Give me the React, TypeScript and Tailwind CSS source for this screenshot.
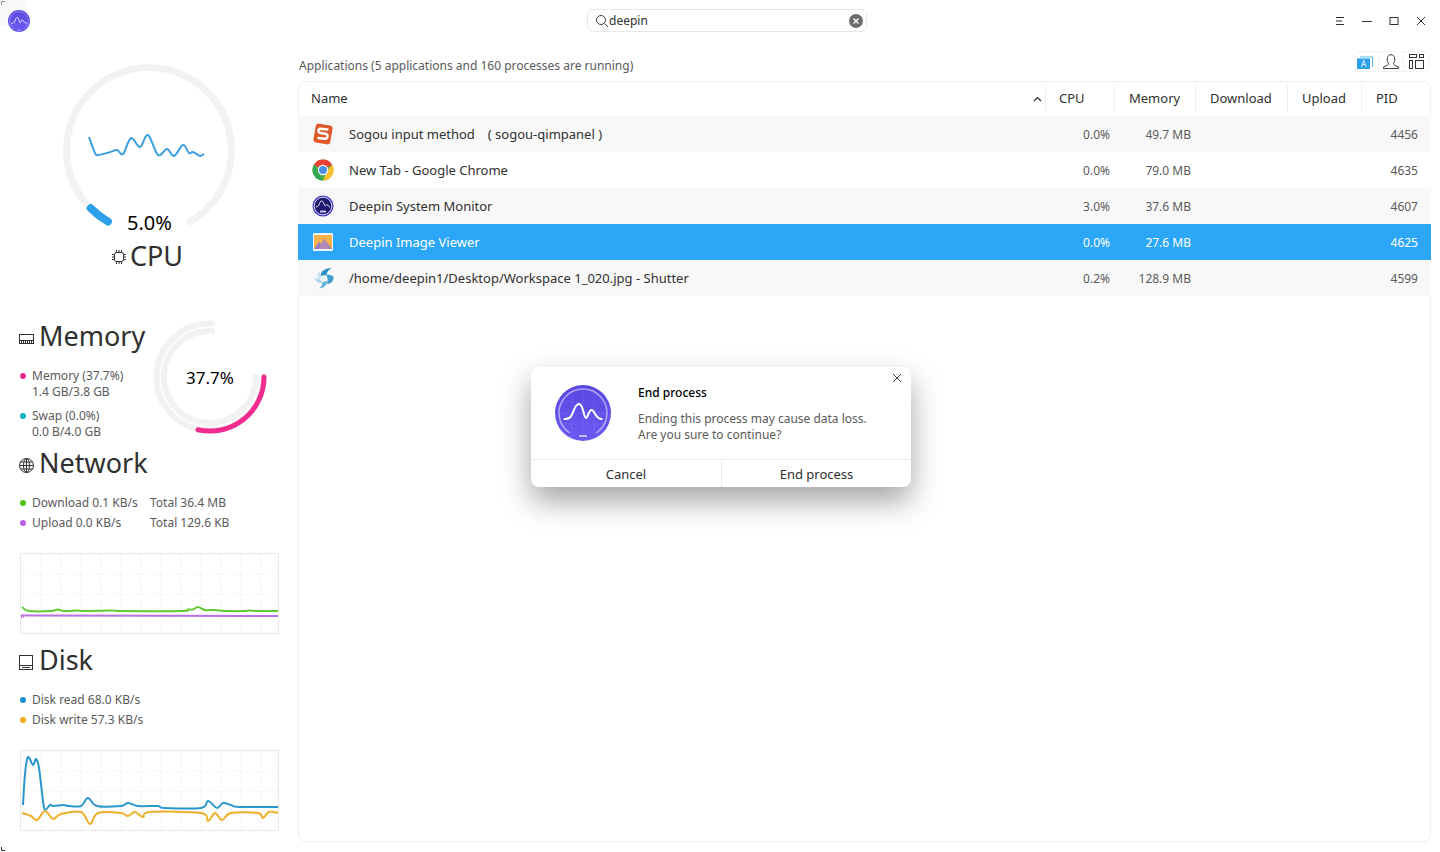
const processes = [
  { name: "Sogou input method", extra: "( sogou-qimpanel )", cpu: "0.0%", mem: "49.7 MB", pid: "4456", icon: "sogou" },
  { name: "New Tab - Google Chrome", cpu: "0.0%", mem: "79.0 MB", pid: "4635", icon: "chrome" },
  { name: "Deepin System Monitor", cpu: "3.0%", mem: "37.6 MB", pid: "4607", icon: "monitor" },
  { name: "Deepin Image Viewer", cpu: "0.0%", mem: "27.6 MB", pid: "4625", icon: "viewer", selected: true },
  { name: "/home/deepin1/Desktop/Workspace 1_020.jpg - Shutter", cpu: "0.2%", mem: "128.9 MB", pid: "4599", icon: "shutter" },
];

type Pt = [number, number];

function smooth(pts: Pt[]) {
  let d = `M${pts[0][0]} ${pts[0][1]}`;
  for (let i = 0; i < pts.length - 1; i++) {
    const p0 = pts[Math.max(i - 1, 0)];
    const p1 = pts[i];
    const p2 = pts[i + 1];
    const p3 = pts[Math.min(i + 2, pts.length - 1)];
    const c1x = p1[0] + (p2[0] - p0[0]) / 6;
    const c1y = p1[1] + (p2[1] - p0[1]) / 6;
    const c2x = p2[0] - (p3[0] - p1[0]) / 6;
    const c2y = p2[1] - (p3[1] - p1[1]) / 6;
    d += ` C${c1x.toFixed(1)} ${c1y.toFixed(1)} ${c2x.toFixed(1)} ${c2y.toFixed(1)} ${p2[0]} ${p2[1]}`;
  }
  return d;
}

const cpuLine: Pt[] = [[26, 73], [32, 89], [35, 91], [46, 88.5], [54, 86], [60, 90], [68, 74], [77, 83], [85, 71], [95, 91], [104, 85], [111, 92], [120, 81], [126, 89], [130, 88], [137, 92], [141, 90]];
const netDown: Pt[] = [[1, 53], [8, 57], [30, 57], [37, 55.5], [43, 57], [57, 56.5], [63, 57], [90, 56.5], [100, 57], [160, 57], [167, 55.5], [172, 55.5], [177, 53], [184, 56], [193, 56], [207, 57], [223, 57], [228, 56.5], [237, 57], [258, 57]];
const netUp: Pt[] = [[2, 63], [10, 61.5], [258, 62]];
const diskRead: Pt[] = [[2, 54], [4, 23], [7, 6], [12, 14], [15, 8], [18, 17], [22, 50], [24, 59], [29, 54], [33, 55], [42, 54], [48, 55], [60, 55], [67, 47], [76, 55], [100, 55], [107, 52], [117, 55], [137, 55], [143, 57], [180, 57], [187, 50], [196, 57], [202, 52], [210, 54], [218, 56], [258, 56]];
const diskWrite: Pt[] = [[1, 62], [10, 65], [16, 69], [24, 60], [32, 68], [40, 63], [60, 61], [69, 73], [77, 62], [100, 62], [107, 65], [114, 61], [122, 66], [129, 61], [180, 62], [187, 70], [194, 62], [201, 69], [210, 62], [237, 62], [242, 67], [248, 61], [258, 62]];

function Logo({ size }: { size: number }) {
  return (
    <svg width={size} height={size} viewBox="0 0 56 56" className="relative shrink-0">
      <defs>
        <linearGradient id="logoFill" x1="0" y1="0" x2="0" y2="1">
          <stop offset="0" stopColor="#5a45e0" />
          <stop offset="1" stopColor="#6a5af2" />
        </linearGradient>
      </defs>
      <circle cx="28" cy="28" r="28" fill="url(#logoFill)" />
      <path d="M14.7 48A24 24 0 1 1 41.3 48" fill="none" stroke="#ffffff" strokeOpacity="0.5" strokeWidth="1.5" />
      <path d="M5 28H51M5 17H51M5 39H51M17 5V51M28 5V51M39 5V51" stroke="#ffffff" strokeOpacity="0.07" strokeWidth="1" />
      <path d="M9.5 34C14 34 16 33 18.5 26C20.5 20.5 22 19 24 19C26 19 27 21 28.5 27C29.5 31 30 33 31 33C33 33 33.5 25 36.7 25C39.5 25 40.5 34 46.7 34" fill="none" stroke="#ffffff" strokeWidth="2" strokeLinecap="round" />
      <rect x="24" y="50" width="8" height="2" rx="0.5" fill="#ffffff" fillOpacity="0.6" />
    </svg>
  );
}

function AppIcon({ kind }: { kind: string }) {
  if (kind === "sogou") {
    return (
      <svg width="22" height="22" viewBox="0 0 22 22">
        <rect x="2.5" y="1.5" width="17" height="19" rx="3" fill="#e0592a" transform="rotate(10 11 11)" />
        <path d="M15.5 6.5L8.5 5.8C7 5.7 6.4 6.6 6.4 7.6C6.4 8.8 7.2 9.8 8.6 10L13.4 10.8C14.8 11 15.6 12 15.5 13.4C15.4 14.8 14.4 15.8 13 15.7L6.4 15" fill="none" stroke="#ffffff" strokeWidth="2.4" strokeLinecap="round" />
      </svg>
    );
  }
  if (kind === "chrome") {
    return (
      <svg width="22" height="22" viewBox="0 0 22 22">
        <circle cx="11" cy="11" r="10.5" fill="#4caf50" />
        <path d="M11 .5A10.5 10.5 0 0 1 20.1 5.75L11 11L1.9 5.75A10.5 10.5 0 0 1 11 .5Z" fill="#ea4335" />
        <path d="M20.1 5.75A10.5 10.5 0 0 1 11 21.5L15.5 11Z" fill="#fbc02d" />
        <path d="M1.9 5.75L6.5 13.6L11 21.5A10.5 10.5 0 0 1 1.9 5.75Z" fill="#34a853" />
        <circle cx="11" cy="11" r="5.2" fill="#ffffff" />
        <circle cx="11" cy="11" r="4" fill="#4a90e2" />
      </svg>
    );
  }
  if (kind === "monitor") {
    return (
      <svg width="22" height="22" viewBox="0 0 22 22">
        <circle cx="11" cy="11" r="10.5" fill="#4a35c8" />
        <circle cx="11" cy="11" r="8.8" fill="#201a6e" stroke="#d8d4ff" strokeWidth="1" />
        <path d="M4 12C6 12 6.5 11 7.5 8.5C8.5 6 9 6 10 6C11 6 11.5 8 12.5 10C13.5 12 14 9.5 15 9.5C16 9.5 16.5 12 18 12" fill="none" stroke="#ffffff" strokeWidth="0.9" />
        <rect x="8" y="15.5" width="6" height="2" rx="0.5" fill="#c9c4ff" />
      </svg>
    );
  }
  if (kind === "viewer") {
    return (
      <svg width="22" height="22" viewBox="0 0 22 22">
        <rect x="1" y="2" width="20" height="18" rx="1" fill="#f2f6fb" />
        <rect x="2" y="4" width="18" height="14" fill="#f8b24c" />
        <path d="M2 18L7 11L10 14L12 8L20 18Z" fill="#8f7cc4" />
        <path d="M6 18L12 8L18 18Z" fill="#b089b8" />
      </svg>
    );
  }
  return (
    <svg width="22" height="22" viewBox="0 0 22 22">
      <path d="M8 9C9 4 13 1 20 1C17 2.5 15 4.5 14.5 8Z" fill="#2f8fc4" />
      <path d="M14 8C17 7.5 19.5 8 21.5 9.5C22 14 19 17 15 17C16 14 16 11 14 8Z" fill="#3f9dd0" />
      <path d="M15.5 14C15 18 12 21 7 21.5C9.5 20 10.5 17.5 10.5 15Z" fill="#62afd9" />
      <path d="M11 15.5C7 17 3.5 15 2 10C3 11.5 5 12.5 7 12Z" fill="#a9d2e8" />
      <path d="M7.5 13C4.5 10.5 5 6 8.5 3.5C8 6 8.5 8 10 9.5Z" fill="#c9e3f1" />
      <circle cx="11" cy="11.5" r="2.6" fill="#eaf5fb" />
    </svg>
  );
}

function Chart({ lines }: { lines: { pts: Pt[]; color: string }[] }) {
  const cols = [20, 40, 60, 80, 100, 120, 140, 160, 180, 200, 220, 240];
  const rows = [20, 40, 60];
  return (
    <div className="ml-px h-[81px] w-[259px] border border-[#e9e9e9]">
      <svg width="257" height="79" viewBox="0 0 257 79" className="block">
        {cols.map((x) => (
          <line key={x} x1={x} y1="0" x2={x} y2="79" stroke="#f1f1f1" strokeDasharray="3 2" />
        ))}
        {rows.map((y) => (
          <line key={y} x1="0" y1={y} x2="257" y2={y} stroke="#f1f1f1" strokeDasharray="3 2" />
        ))}
        {lines.map((l) => (
          <path key={l.color} d={smooth(l.pts)} fill="none" stroke={l.color} strokeWidth="2" />
        ))}
      </svg>
    </div>
  );
}

function Legend({ color, children }: { color: string; children: React.ReactNode }) {
  return (
    <div className="flex">
      <span className={`ml-px mr-[6px] mt-[5px] size-[6px] shrink-0 rounded-full ${color}`} />
      <div className="text-xs leading-[16px] text-[#5a5a5a]">{children}</div>
    </div>
  );
}

function Heading({ icon, title }: { icon: React.ReactNode; title: string }) {
  return (
    <div className="flex h-9 items-center">
      <div className="flex w-5 shrink-0 items-center pt-[5px]">{icon}</div>
      <span className="text-[27px] leading-9 text-[#303030]">{title}</span>
    </div>
  );
}

function Sidebar() {
  return (
    <aside className="w-[298px] shrink-0 pl-[19px]">
      <div className="-ml-[19px] pt-6">
        <div className="relative mx-auto size-[172px]">
          <svg width="172" height="172" viewBox="0 0 172 172" fill="none" className="block">
            <path d="M45 157.6A82.5 82.5 0 1 1 127 157.6" stroke="#f2f2f2" strokeWidth="7" strokeLinecap="round" />
            <path d="M27.7 144.3A82.5 82.5 0 0 0 45 157.6" stroke="#2ca0e8" strokeWidth="8" strokeLinecap="round" />
            <path d={smooth(cpuLine)} stroke="#3c9fe0" strokeWidth="2" />
          </svg>
          <span className="absolute bottom-[-1px] left-[64px] text-xl leading-7 text-black">5.0%</span>
        </div>
        <div className="mt-[2px] flex h-9 items-center justify-center pr-1">
          <svg width="16" height="16" viewBox="0 0 16 16" fill="none" stroke="#303030" strokeWidth="1" className="mr-[3px] mt-[2px]">
            <rect x="3.5" y="3.5" width="9" height="9" rx="2" />
            <path d="M1 5.5H3.5M1 8H3.5M1 10.5H3.5M12.5 5.5H15M12.5 8H15M12.5 10.5H15M5.5 1V3.5M8 1V3.5M10.5 1V3.5M5.5 12.5V15M8 12.5V15M10.5 12.5V15" />
          </svg>
          <span className="text-[27px] leading-9 text-[#303030]">CPU</span>
        </div>
      </div>

      <div className="mt-11 flex">
        <div className="w-[134px] shrink-0">
          <Heading
            title="Memory"
            icon={
              <svg width="15" height="10" viewBox="0 0 15 10" fill="none" stroke="#303030" strokeWidth="1">
                <rect x="0.5" y="0.5" width="14" height="9" />
                <path d="M0.5 6.5H14.5M2.5 7V9.5M4.5 7V9.5M6.5 7V9.5M8.5 7V9.5M10.5 7V9.5M12.5 7V9.5" />
              </svg>
            }
          />
          <div className="mt-[14px] flex flex-col gap-2">
            <Legend color="bg-[#f02c91]">
              <div>Memory (37.7%)</div>
              <div>1.4 GB/3.8 GB</div>
            </Legend>
            <Legend color="bg-[#0fb1b8]">
              <div>Swap (0.0%)</div>
              <div>0.0 B/4.0 GB</div>
            </Legend>
          </div>
        </div>
        <div className="relative mt-[2px] size-[114px] shrink-0">
          <svg width="114" height="114" viewBox="0 0 114 114" fill="none" className="block">
            <path d="M59 3.5A53.5 53.5 0 1 0 110.5 57" stroke="#f2f2f2" strokeWidth="6" strokeLinecap="round" />
            <path d="M59 11A46 46 0 1 0 103 57" stroke="#f2f2f2" strokeWidth="6" strokeLinecap="round" />
            <path d="M111 57A54 54 0 0 1 45 109.7" stroke="#f02c91" strokeWidth="5" strokeLinecap="round" />
          </svg>
          <span className="absolute inset-x-0 top-[46px] text-center text-[17px] leading-6 text-black">37.7%</span>
        </div>
      </div>

      <div className="mt-[5px]">
        <Heading
          title="Network"
          icon={
            <svg width="15" height="15" viewBox="0 0 15 15" fill="none" stroke="#303030" strokeWidth="1">
              <circle cx="7.5" cy="7.5" r="7" />
              <ellipse cx="7.5" cy="7.5" rx="3" ry="7" />
              <path d="M7.5 0.5V14.5M0.5 7.5H14.5M1.5 4H13.5M1.5 11H13.5" />
            </svg>
          }
        />
        <div className="mt-3 text-xs leading-5 text-[#5a5a5a]">
          <div className="flex items-center">
            <span className="ml-px mr-[6px] size-[6px] rounded-full bg-[#52c41a]" />
            <span className="w-[118px]">Download 0.1 KB/s</span>
            <span>Total 36.4 MB</span>
          </div>
          <div className="flex items-center">
            <span className="ml-px mr-[6px] size-[6px] rounded-full bg-[#b660e0]" />
            <span className="w-[118px]">Upload 0.0 KB/s</span>
            <span>Total 129.6 KB</span>
          </div>
        </div>
        <div className="mt-5">
          <Chart lines={[{ pts: netDown, color: "#62c832" }, { pts: netUp, color: "#bb70e4" }]} />
        </div>
      </div>

      <div className="mt-2">
        <Heading
          title="Disk"
          icon={
            <svg width="14" height="15" viewBox="0 0 14 15" fill="none" stroke="#303030" strokeWidth="1">
              <rect x="0.5" y="0.5" width="13" height="14" />
              <path d="M0.5 10.5H13.5M3 12.5H11" />
            </svg>
          }
        />
        <div className="mt-3 text-xs leading-5 text-[#5a5a5a]">
          <div className="flex items-center">
            <span className="ml-px mr-[6px] size-[6px] rounded-full bg-[#1b8fd0]" />
            <span>Disk read 68.0 KB/s</span>
          </div>
          <div className="flex items-center">
            <span className="ml-px mr-[6px] size-[6px] rounded-full bg-[#f0ac14]" />
            <span>Disk write 57.3 KB/s</span>
          </div>
        </div>
        <div className="mt-5">
          <Chart lines={[{ pts: diskRead, color: "#2b97cf" }, { pts: diskWrite, color: "#eeb02a" }]} />
        </div>
      </div>
    </aside>
  );
}

function ProcessTable() {
  const gridCols = "grid grid-cols-[747px_69px_81px_92px_74px_70px]";
  const headers = ["CPU", "Memory", "Download", "Upload", "PID"];
  return (
    <div className="h-[761px] rounded-lg border border-[#eeeeee]">
      <div className={`-mx-px h-[34px] items-center text-[13px] text-[#303030] ${gridCols}`}>
        <div className="flex items-center justify-between pl-[13px] pr-[3px]">
          <span>Name</span>
          <svg width="9" height="6" viewBox="0 0 9 6" fill="none" stroke="#303030" strokeWidth="1.2">
            <path d="M1 5L4.5 1.5L8 5" />
          </svg>
        </div>
        {headers.map((h) => (
          <div
            key={h}
            className={`flex h-7 items-center border-l border-[#f0f0f0] ${h === "CPU" ? "pl-[13px]" : "pl-[14px]"}`}
          >
            {h}
          </div>
        ))}
      </div>
      {processes.map((p, i) => (
        <div
          key={p.pid}
          className={`-mx-px h-9 items-center text-[13px] ${gridCols} ${
            p.selected ? "bg-[#2ca7f8] text-white" : i % 2 === 0 ? "bg-[#f8f8f8] text-[#303030]" : "bg-white text-[#303030]"
          }`}
        >
          <div className="flex items-center pl-[14px]">
            <div className="flex w-[22px] justify-center">
              <AppIcon kind={p.icon} />
            </div>
            <span className="ml-[15px] pt-[2px]">{p.name}</span>
            {p.extra ? <span className="ml-[13px] pt-[2px]">{p.extra}</span> : null}
          </div>
          <div className={`pr-1 pt-[2px] text-right text-xs ${p.selected ? "text-white" : "text-[#5a5a5a]"}`}>{p.cpu}</div>
          <div className={`pr-1 pt-[2px] text-right text-xs ${p.selected ? "text-white" : "text-[#5a5a5a]"}`}>{p.mem}</div>
          <div />
          <div />
          <div className={`pr-[13px] pt-[2px] text-right text-xs ${p.selected ? "text-white" : "text-[#5a5a5a]"}`}>{p.pid}</div>
        </div>
      ))}
    </div>
  );
}

function EndProcessDialog() {
  return (
    <div className="absolute left-[531px] top-[367px] flex h-[120px] w-[380px] flex-col rounded-lg bg-white shadow-[0_14px_30px_rgba(0,0,0,0.36)]">
      <button type="button" className="absolute right-2 top-[5px] flex size-3 items-center justify-center">
        <svg width="10" height="10" viewBox="0 0 10 10" stroke="#404040" strokeWidth="1">
          <path d="M1 1L9 9M9 1L1 9" />
        </svg>
      </button>
      <div className="flex h-[92px] items-center pl-6">
        <Logo size={56} />
        <div className="ml-[27px] pt-[2px] text-xs leading-4">
          <div className="mb-[10px] font-medium text-black">End process</div>
          <div className="text-[#5a5a5a]">Ending this process may cause data loss.</div>
          <div className="text-[#5a5a5a]">Are you sure to continue?</div>
        </div>
      </div>
      <div className="flex h-7 border-t border-[#ececec] text-[13px] text-[#303030]">
        <div className="flex w-[191px] items-center justify-center border-r border-[#ececec] pt-[2px]">Cancel</div>
        <div className="flex flex-1 items-center justify-center pt-[2px]">End process</div>
      </div>
    </div>
  );
}

export default function App() {
  return (
    <div className="relative h-[852px] w-[1440px] overflow-hidden bg-white font-['Noto_Sans',sans-serif]">
      <div className="absolute left-0 top-0 size-[25px] bg-[#f8f8f8]" />
      <svg width="6" height="6" viewBox="0 0 6 6" fill="none" stroke="#8a8a8a" strokeWidth="1" className="absolute left-0 top-0">
        <path d="M1.5 5V1.5H5" />
      </svg>
      <svg width="6" height="5" viewBox="0 0 6 5" fill="none" stroke="#303030" strokeWidth="1" className="absolute bottom-0 left-0">
        <path d="M1.5 0V3.5H5" />
      </svg>
      <header className="flex h-10 items-start">
        <div className="w-[587px] pl-2 pt-[10px]">
          <Logo size={22} />
        </div>
        <div className="mt-[9px] flex h-[23px] w-[280px] items-center rounded-md border border-[#e8e8e8] pl-[7px] pr-[3px]">
          <svg width="14" height="14" viewBox="0 0 14 14" fill="none" stroke="#404040" strokeWidth="1">
            <circle cx="6" cy="6" r="4.5" />
            <path d="M9.5 9.5L13 13" />
          </svg>
          <span className="flex-1 text-xs text-[#303030]">deepin</span>
          <svg width="14" height="14" viewBox="0 0 14 14">
            <circle cx="7" cy="7" r="7" fill="#6d6d6d" />
            <path d="M4.5 4.5L9.5 9.5M9.5 4.5L4.5 9.5" stroke="#ffffff" strokeWidth="1.4" />
          </svg>
        </div>
        <div className="flex flex-1 justify-end pr-[6px] pt-[14px]">
          <button type="button" className="flex h-[14px] w-[27px] items-center justify-center">
            <svg width="10" height="10" viewBox="0 0 10 10" stroke="#303030" strokeWidth="1">
              <path d="M1 1.5H9M1 5H7M1 8.5H9" />
            </svg>
          </button>
          <button type="button" className="flex h-[14px] w-[27px] items-center justify-center">
            <svg width="10" height="10" viewBox="0 0 10 10" stroke="#303030" strokeWidth="1">
              <path d="M0 5.5H10" />
            </svg>
          </button>
          <button type="button" className="flex h-[14px] w-[27px] items-center justify-center">
            <svg width="10" height="10" viewBox="0 0 10 10" fill="none" stroke="#303030" strokeWidth="1">
              <rect x="1" y="1.5" width="8" height="7" />
            </svg>
          </button>
          <button type="button" className="flex h-[14px] w-[27px] items-center justify-center">
            <svg width="10" height="10" viewBox="0 0 10 10" stroke="#303030" strokeWidth="1">
              <path d="M1 1L9 9M9 1L1 9" />
            </svg>
          </button>
        </div>
      </header>

      <div className="flex">
        <Sidebar />
        <main className="flex-1 pr-[9px]">
          <div className="flex h-[41px] items-start justify-between pl-px">
            <span className="mt-[18px] text-xs leading-4 text-[#5a5a5a]">Applications (5 applications and 160 processes are running)</span>
            <div className="mr-px mt-[11px] flex h-[21px] w-[76px] items-center rounded-md border border-[#f3f3f3]">
              <div className="flex h-full w-6 items-center border-r border-[#f3f3f3] pl-[2px]">
                <svg width="17" height="14" viewBox="0 0 17 14" fill="none">
                  <rect x="0" y="3.5" width="13" height="10.5" fill="#2ca0e8" />
                  <path d="M3 2H15.5V12" stroke="#2ca0e8" strokeWidth="0.8" />
                  <text x="6.5" y="11.5" fontSize="8" fill="#ffffff" textAnchor="middle" fontFamily="Noto Sans">A</text>
                </svg>
              </div>
              <div className="flex h-full w-[25px] items-center justify-center border-r border-[#f3f3f3]">
                <svg width="16" height="15" viewBox="0 0 16 15" fill="none" stroke="#404040" strokeWidth="1">
                  <path d="M5.5 9.5C4 7.5 4 5.5 4.5 3.5C5 1.5 6.5 0.7 8 0.7C9.5 0.7 11 1.5 11.5 3.5C12 5.5 12 7.5 10.5 9.5C10.5 11 12 11.5 15.5 13V14.5H0.5V13C4 11.5 5.5 11 5.5 9.5Z" />
                </svg>
              </div>
              <div className="flex h-full flex-1 items-center justify-center">
                <svg width="15" height="15" viewBox="0 0 15 15" fill="none" stroke="#303030" strokeWidth="1">
                  <rect x="0.5" y="0.5" width="7" height="3" />
                  <rect x="10.5" y="0.5" width="4" height="3" />
                  <rect x="0.5" y="6.5" width="3" height="8" />
                  <rect x="6.5" y="6.5" width="8" height="8" />
                </svg>
              </div>
            </div>
          </div>
          <ProcessTable />
        </main>
      </div>

      <EndProcessDialog />
    </div>
  );
}
